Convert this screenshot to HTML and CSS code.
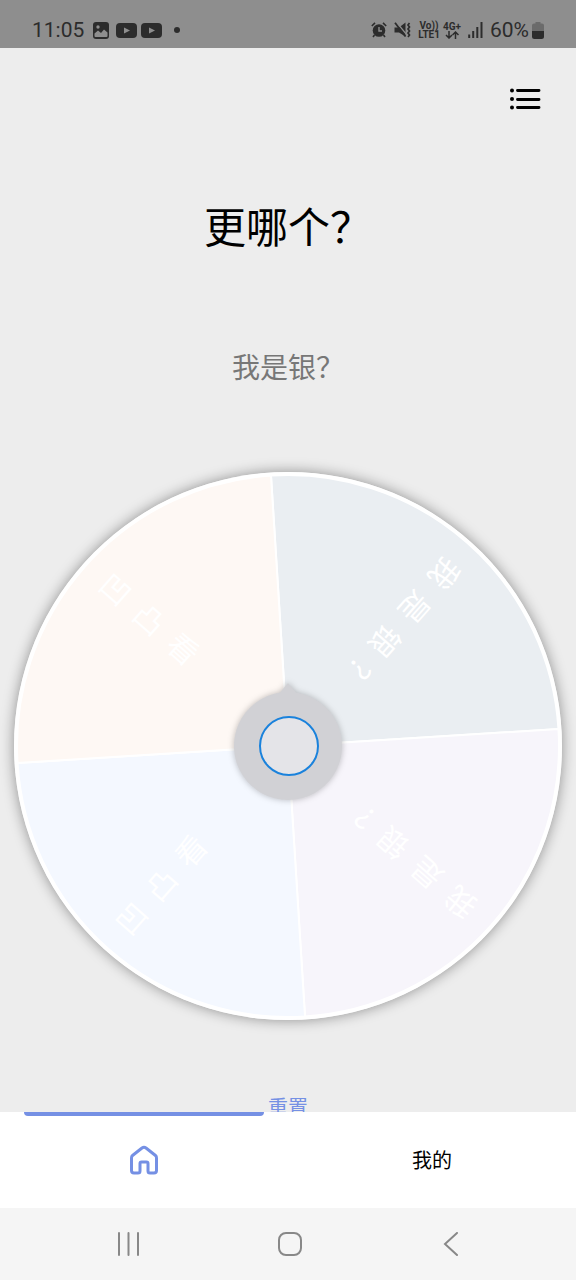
FILE: index.html
```html
<!DOCTYPE html>
<html lang="zh-CN">
<head>
<meta charset="utf-8">
<meta name="viewport" content="width=device-width, initial-scale=1">
<title>更哪个？</title>
<link rel="stylesheet" href="styles.css">
</head>
<body>
<header class="status">
  <div class="status-group">
    <span class="status-text">11:05</span>
    <svg class="status-picture" width="16" height="17" viewBox="0 0 16 17"><rect width="16" height="17" rx="3" fill="currentColor"/><path d="M1.500 11.500 5 8.500l3 2.500 3-3.500 3.500 3v3.500q0 1-1 1h-11q-1 0-1-1z" fill="#8e8e8e"/><circle cx="5" cy="5" r="1.700" fill="#8e8e8e"/></svg>
    <svg class="status-video" width="21" height="15" viewBox="0 0 21 15"><rect width="21" height="15" rx="4" fill="currentColor"/><path d="M8 4.500v6l6-3z" fill="#8e8e8e"/></svg>
    <svg class="status-video" width="21" height="15" viewBox="0 0 21 15"><rect width="21" height="15" rx="4" fill="currentColor"/><path d="M8 4.500v6l6-3z" fill="#8e8e8e"/></svg>
    <span class="status-dot"></span>
  </div>
  <div class="status-group status-system">
    <svg width="16" height="16" viewBox="0 0 16 16"><circle cx="8" cy="8.500" r="6.300" fill="currentColor"/><path d="M.8 4 4 .9M15.200 4 12 .9M3.500 13 2 15M12.500 13l1.500 2" stroke="currentColor" stroke-width="1.600" fill="none"/><path d="M8 5v4h3" stroke="#8e8e8e" stroke-width="1.400" fill="none"/></svg>
    <svg width="17" height="16" viewBox="0 0 17 16"><path d="M.5 5.500H5L11.500.5v14L5 10.500H.5z" fill="currentColor"/><path d="M2.500.3 13 13" stroke="#8e8e8e" stroke-width="1.300"/><path d="M1 .8 11.500 14.500" stroke="currentColor" stroke-width="1.800"/><path d="M15.500 1l-1.500 2 1.500 2-1.500 2 1.500 2-1.500 2 1.500 2-1.500 2" stroke="currentColor" stroke-width="1.700" fill="none"/></svg>
    <span class="network network-volte"><span>Vo))</span><span>LTE1</span></span>
    <span class="network"><span>4G+</span><svg width="14" height="8" viewBox="0 0 14 8"><path d="M4 0v7M1 4l3 3 3-3M10.500 8V1M7.500 4l3-3 3 3" stroke="currentColor" stroke-width="1.500" fill="none"/></svg></span>
    <svg width="15" height="16" viewBox="0 0 15 16"><path d="M1.200 12.500V16M5.200 9v7M9.300 5v11M13.500 0v16" stroke="currentColor" stroke-width="2"/></svg>
    <span class="status-text battery-text">60%</span>
    <svg width="12" height="17" viewBox="0 0 12 17"><path d="M3.500 0h5v1.500H10q2 0 2 2V9H0V3.500q0-2 2-2h1.500z" fill="#6b6b6b"/><path d="M0 9h12v5.500Q12 17 9.500 17h-7Q0 17 0 14.500z" fill="currentColor"/></svg>
  </div>
</header>

<main class="page">
  <div class="toolbar">
    <button class="menu" type="button" aria-label="列表">
      <svg width="31" height="22" viewBox="0 0 31 22"><path d="M7.500 2.500H29M7.500 11.500H29M7.500 19.500H29" stroke="#000" stroke-width="2.900" stroke-linecap="round"/><circle cx="2" cy="2.500" r="2"/><circle cx="2" cy="11" r="2"/><circle cx="2" cy="19.500" r="2"/></svg>
    </button>
  </div>
  <h1 class="title">更哪个？</h1>
  <p class="result">我是银？</p>
  <section class="wheel">
    <svg class="wheel-face" viewBox="-274 -274 548 548">
      <circle r="274" fill="#fff"/>
      <g transform="rotate(-3.600)" stroke="#fff" stroke-width="2">
        <path d="M0 0V-271A271 271 0 0 1 271 0z" fill="#eaeef2"/>
        <path d="M0 0H271A271 271 0 0 1 0 271z" fill="#f7f5fb"/>
        <path d="M0 0V271A271 271 0 0 1-271 0z" fill="#f4f8ff"/>
        <path d="M0 0H-271A271 271 0 0 1 0-271z" fill="#fef8f4"/>
      </g>
      <g class="wheel-label">
        <text transform="rotate(131.400)" x="-248 -203 -158 -113" y="8">我是银？</text>
        <text transform="rotate(221.400)" x="-248 -203 -158 -113" y="8">我是银？</text>
        <text transform="rotate(311.400)" x="-248 -203 -158" y="8">凹凸看</text>
        <text transform="rotate(41.400)" x="-248 -203 -158" y="8">凹凸看</text>
      </g>
    </svg>
    <button class="spin" type="button" aria-label="开始">
      <svg width="108" height="126" viewBox="-54 -63 108 126"><path d="M0-63 8-53.400A54 54 0 1 1-8-53.400z" fill="#d1d1d5"/><circle cx="1" r="29" fill="#e4e4e8" stroke="#1a82dc" stroke-width="2"/></svg>
    </button>
  </section>
  <button class="reset" type="button">重置</button>
</main>

<nav class="tabs">
  <a class="tab tab-active" href="#home" aria-label="首页">
    <svg width="30" height="30" viewBox="0 0 30 30"><path d="M3.500 10.500Q2.500 11.300 2.500 13V25.500Q2.500 28 5 28H9Q11 28 11 26V18.500Q11 17 12.500 17H17.500Q19 17 19 18.500V26Q19 28 21 28H25Q27.500 28 27.500 25.500V13Q27.500 11.300 26.500 10.500L17 3Q15 1.500 13 3z" fill="none" stroke="#7590e4" stroke-width="3" stroke-linejoin="round"/></svg>
  </a>
  <a class="tab" href="#mine">我的</a>
</nav>

<footer class="system-nav">
  <button type="button" aria-label="最近任务"><svg width="24" height="24" viewBox="0 0 24 24"><path d="M2 1v22M11.500 1v22M21 1v22"/></svg></button>
  <button type="button" aria-label="主屏幕"><svg width="24" height="24" viewBox="0 0 24 24"><rect x="1" y="1" width="22" height="22" rx="7"/></svg></button>
  <button type="button" aria-label="返回"><svg width="24" height="24" viewBox="0 0 24 24"><path d="M18 1 6 12 18 23"/></svg></button>
</footer>
</body>
</html>
```

FILE: styles.css
```css
* {
  box-sizing: border-box;
}

body {
  display: flex;
  flex-direction: column;
  height: 100vh;
  margin: 0;
  background: #ededed;
  color: #000;
  font-family: "Noto Sans CJK SC", sans-serif;
}

button {
  display: grid;
  place-items: center;
  padding: 0;
  border: 0;
  background: none;
  font: inherit;
}

svg {
  display: block;
  flex: none;
}

.status {
  display: flex;
  flex: none;
  align-items: center;
  justify-content: space-between;
  height: 48px;
  padding: 12px 32px 0;
  background: #8e8e8e;
  color: #2c2c2c;
  font-family: Roboto, sans-serif;
}

.status-group {
  display: flex;
  align-items: center;
}

.status-text {
  font-size: 21px;
  line-height: 24px;
}

.status-picture {
  margin-left: 9px;
}

.status-video {
  margin-left: 4px;
}

.status-picture + .status-video {
  margin-left: 7px;
}

.status-dot {
  width: 6px;
  height: 6px;
  margin-left: 12px;
  border-radius: 50%;
  background: currentColor;
}

.status-system {
  gap: 7px;
}

.network {
  display: flex;
  flex-direction: column;
  align-items: center;
  font-size: 10px;
  font-weight: 700;
  line-height: 9px;
}

.network-volte {
  margin-right: -4px;
}

.battery-text {
  margin-right: -4px;
}

.page {
  display: flex;
  flex: 1;
  flex-direction: column;
  min-height: 0;
  overflow: hidden;
}

.toolbar {
  display: flex;
  flex: none;
  justify-content: flex-end;
  padding: 40px 35px 0;
}

.title {
  flex: none;
  margin: 85px 0 0;
  font-size: 42px;
  font-weight: 400;
  line-height: 60px;
  text-align: center;
}

.result {
  flex: none;
  margin: 91px 0 0;
  color: #777;
  font-size: 28px;
  line-height: 40px;
  text-align: center;
}

.wheel {
  display: grid;
  flex: none;
  place-items: center;
  margin: 86px 14px 0;
  border-radius: 50%;
  box-shadow: 0 0 14px rgba(0, 0, 0, 0.4);
}

.wheel-face,
.spin {
  grid-area: 1 / 1;
}

.wheel-face {
  width: 100%;
}

.wheel-label {
  fill: #fff;
  font-size: 30px;
}

.spin {
  filter: drop-shadow(0 0 3px rgba(0, 0, 0, 0.25));
}

.reset {
  flex: none;
  align-self: center;
  margin-top: 72px;
  color: #7590e4;
  font-size: 20px;
  line-height: 30px;
}

.tabs {
  display: grid;
  flex: none;
  grid-template-columns: 1fr 1fr;
  height: 96px;
  background: #fff;
}

.tab {
  display: grid;
  place-items: center;
  margin: 0 24px;
  color: #000;
  font-size: 20px;
  line-height: 30px;
  text-decoration: none;
}

.tab-active {
  grid-template-rows: 4px 1fr 4px;
}

.tab-active::before {
  width: 100%;
  height: 4px;
  border-radius: 0 0 4px 4px;
  background: #7590e4;
  content: "";
}

.system-nav {
  display: grid;
  flex: none;
  grid-template-columns: repeat(3, 1fr);
  height: 72px;
  padding: 0 44px 0 48px;
  background: #f5f5f5;
}

.system-nav svg {
  fill: none;
  stroke: #888;
  stroke-width: 2;
  stroke-linecap: round;
}
```
